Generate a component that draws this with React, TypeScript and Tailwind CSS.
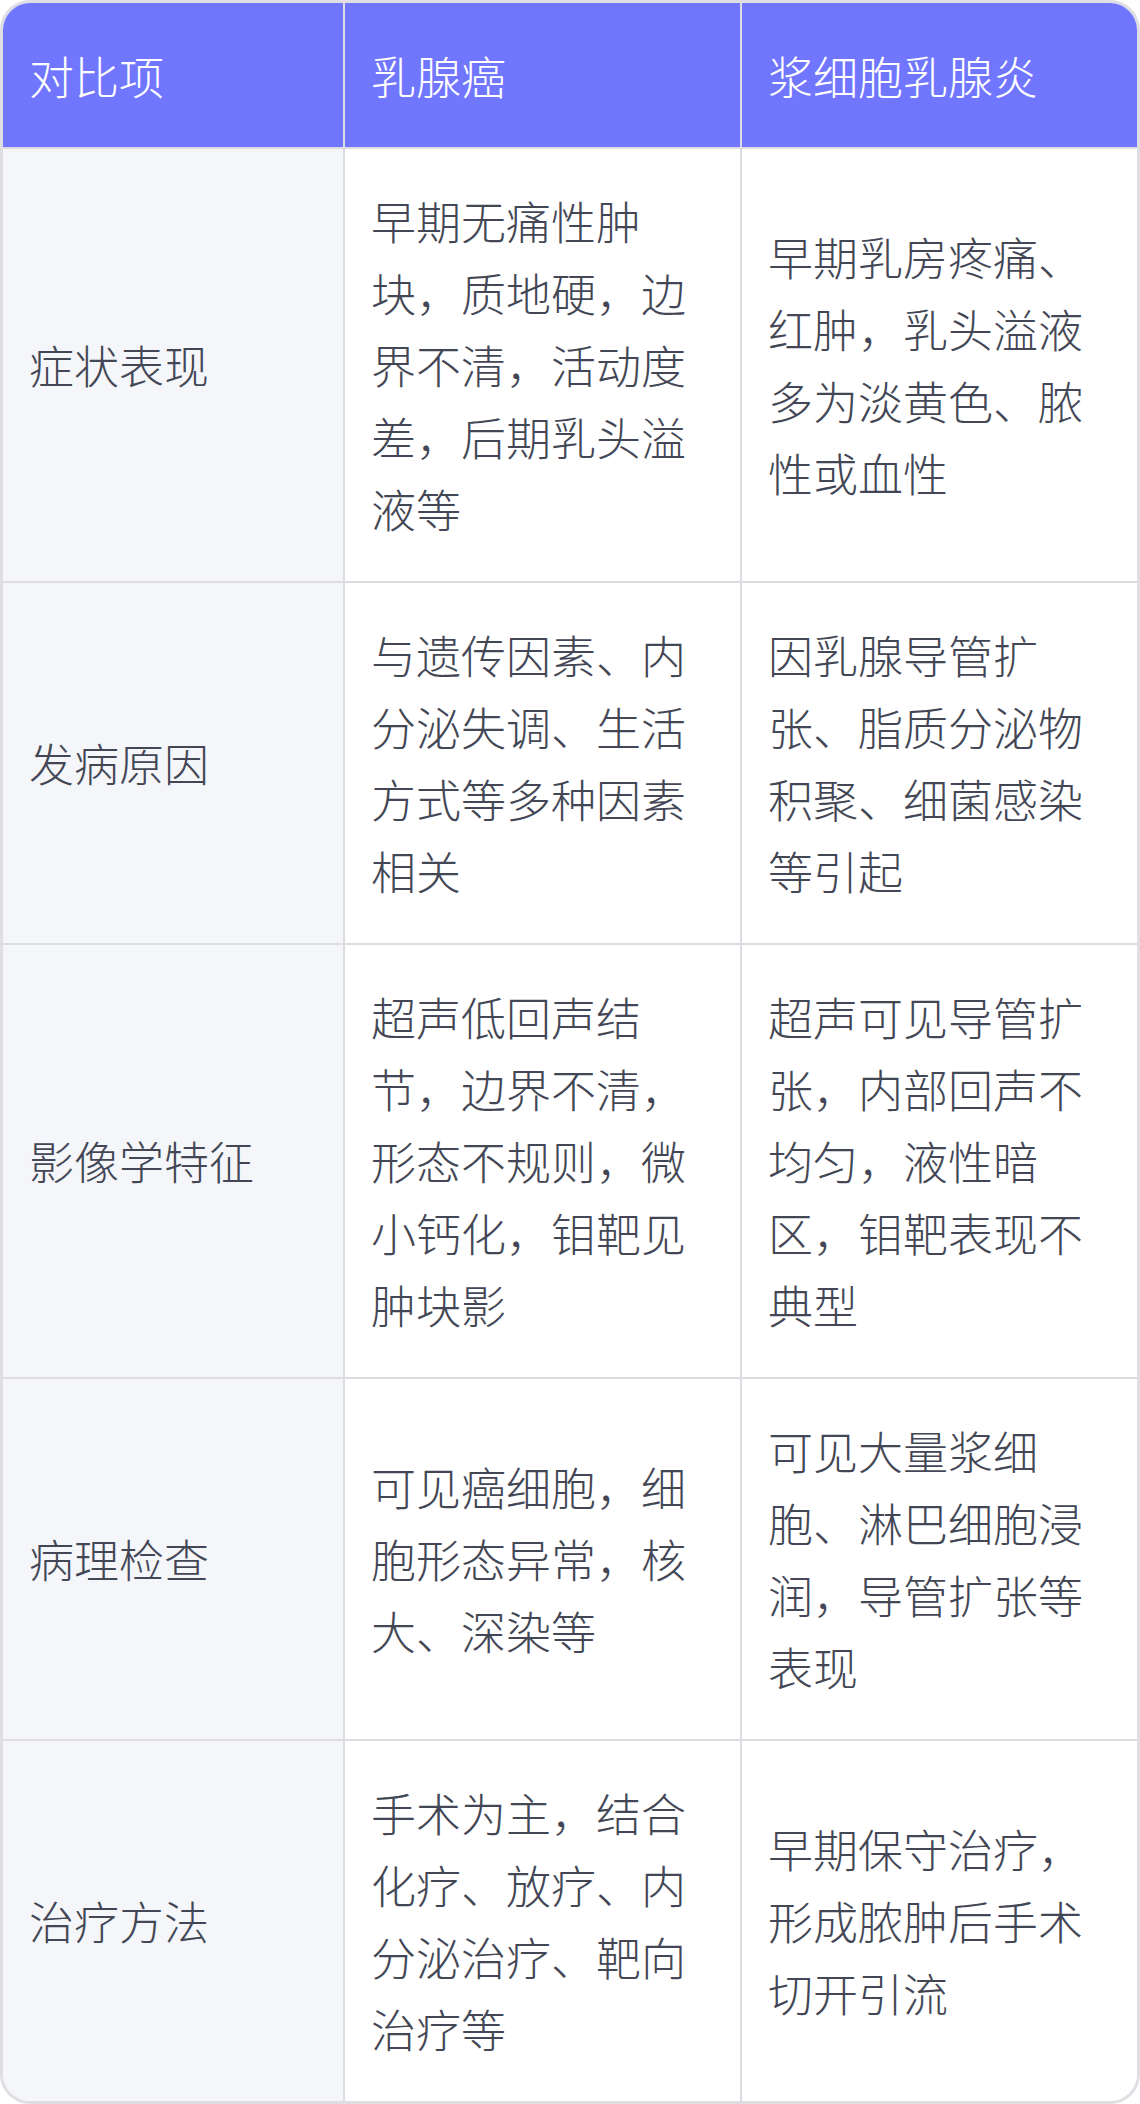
import React from 'react';

const headers = ['对比项', '乳腺癌', '浆细胞乳腺炎'];

const rows: [string, string, string][] = [
  ['症状表现', '早期无痛性肿块，质地硬，边界不清，活动度差，后期乳头溢液等', '早期乳房疼痛、红肿，乳头溢液多为淡黄色、脓性或血性'],
  ['发病原因', '与遗传因素、内分泌失调、生活方式等多种因素相关', '因乳腺导管扩张、脂质分泌物积聚、细菌感染等引起'],
  ['影像学特征', '超声低回声结节，边界不清，形态不规则，微小钙化，钼靶见肿块影', '超声可见导管扩张，内部回声不均匀，液性暗区，钼靶表现不典型'],
  ['病理检查', '可见癌细胞，细胞形态异常，核大、深染等', '可见大量浆细胞、淋巴细胞浸润，导管扩张等表现'],
  ['治疗方法', '手术为主，结合化疗、放疗、内分泌治疗、靶向治疗等', '早期保守治疗，形成脓肿后手术切开引流'],
];

const App: React.FC = () => {
  return (
    <div
      className="w-[1140px] bg-white"
      style={{ fontFamily: '"Noto Sans CJK SC", "Noto Sans", sans-serif' }}
    >
      <div className="border-[3px] border-[#dedee3] rounded-[30px] overflow-hidden grid grid-cols-[342px_397px_1fr] text-[45px] leading-[72px] font-light">
        {headers.map((h, i) => (
          <div
            key={h}
            className={`bg-[#7176ff] text-white px-[26px] pt-[37px] pb-[35px] flex items-center border-b-2 border-[#dcdce2] ${
              i < 2 ? 'border-r-2' : ''
            }`}
          >
            {h}
          </div>
        ))}
        {rows.map((row, r) =>
          row.map((cell, c) => (
            <div
              key={`${r}-${c}`}
              className={`px-[26px] py-[36px] flex items-center text-[#434755] border-[#dcdce2] ${
                c === 0 ? 'bg-[#f5f6fa]' : 'bg-white'
              } ${c < 2 ? 'border-r-2' : ''} ${r < rows.length - 1 ? 'border-b-2' : ''}`}
            >
              {cell}
            </div>
          ))
        )}
      </div>
    </div>
  );
};

export default App;
